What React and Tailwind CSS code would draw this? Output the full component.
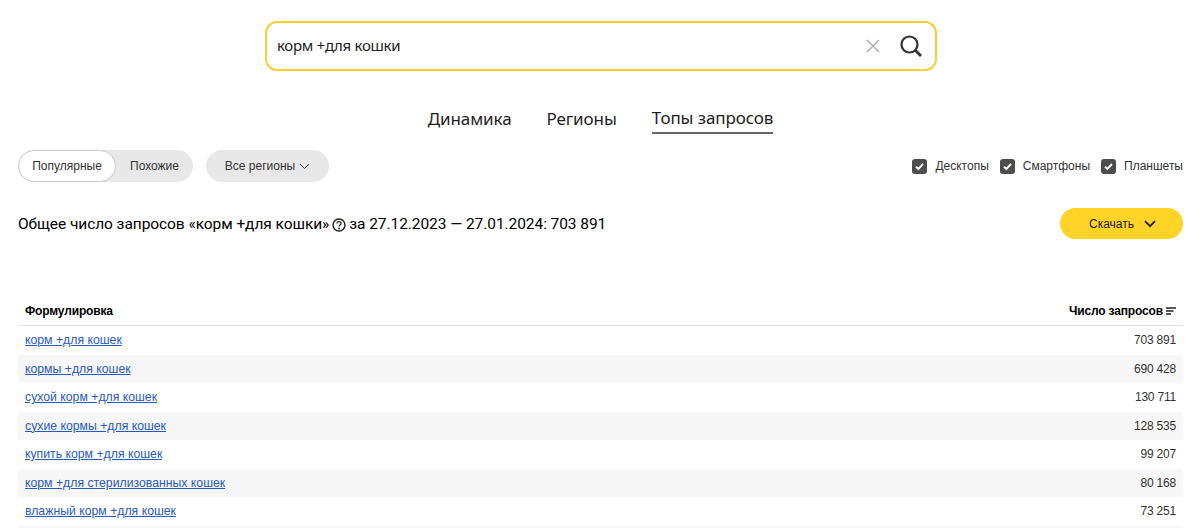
const rows = [
  ["корм +для кошек", "703 891"],
  ["кормы +для кошек", "690 428"],
  ["сухой корм +для кошек", "130 711"],
  ["сухие кормы +для кошек", "128 535"],
  ["купить корм +для кошек", "99 207"],
  ["корм +для стерилизованных кошек", "80 168"],
  ["влажный корм +для кошек", "73 251"],
  ["", ""],
];

function Check({ label }) {
  return (
    <label className="flex items-center gap-[8px]">
      <span className="flex h-[15px] w-[15px] items-center justify-center rounded-[3px] bg-[#4d4d4d]">
        <svg width="11" height="11" viewBox="0 0 11 11" fill="none">
          <path d="M2 5.7 4.4 8 9 3" stroke="#fff" strokeWidth="1.9" />
        </svg>
      </span>
      <span>{label}</span>
    </label>
  );
}

export default function App() {
  return (
    <div className="h-[528px] overflow-hidden bg-white pl-[18px] pr-[17px] pt-[21px] font-['Liberation_Sans',sans-serif] text-[#1a1a1a]">
      <div className="ml-[247px] flex h-[50px] w-[672px] items-center rounded-[12px] border-2 border-[#fc3] pl-[10px] pr-[12px]">
        <span className="flex-1 pb-[2px] font-['Noto_Sans',sans-serif] text-[15px] tracking-[-0.3px] text-[#222]">корм +для кошки</span>
        <svg width="16" height="16" viewBox="0 0 16 16" fill="none" className="mr-[18px]">
          <path d="M2 2 14 14M14 2 2 14" stroke="#aaa" strokeWidth="1.4" />
        </svg>
        <svg width="24" height="24" viewBox="0 0 24 24" fill="none">
          <circle cx="10.5" cy="10.5" r="8" stroke="#333" strokeWidth="2.2" />
          <path d="m16.5 16.5 5.5 5.5" stroke="#333" strokeWidth="2.8" />
        </svg>
      </div>

      <div className="mt-[33px] flex justify-center gap-[35px] font-['Noto_Sans',sans-serif] text-[17px] leading-[30px] tracking-[-0.1px] text-[#222]">
        <span>Динамика</span>
        <span>Регионы</span>
        <span className="border-b-2 border-[#666] leading-[28px]">Топы запросов</span>
      </div>

      <div className="mt-[16px] flex h-[32px] items-center justify-between text-[12px] text-[#333]">
        <div className="flex gap-[13px]">
          <div className="flex h-[32px] rounded-full bg-[#e8e8e8]">
            <span className="flex w-[98px] items-center justify-center rounded-full border border-[#ccc] bg-white">Популярные</span>
            <span className="flex w-[77px] items-center justify-center">Похожие</span>
          </div>
          <div className="flex h-[32px] w-[123px] items-center justify-center gap-[4px] rounded-full bg-[#e8e8e8]">
            Все регионы
            <svg width="11" height="7" viewBox="0 0 11 7" fill="none">
              <path d="m1 1 4.5 4.5L10 1" stroke="#333" />
            </svg>
          </div>
        </div>
        <div className="flex gap-[11px]">
          <Check label="Десктопы" />
          <Check label="Смартфоны" />
          <Check label="Планшеты" />
        </div>
      </div>

      <div className="mt-[26px] flex h-[31px] items-center justify-between">
        <div className="flex items-center pt-[2px] font-['Roboto',sans-serif] text-[15.5px] tracking-[-0.07px] text-black">
          Общее число запросов «корм +для кошки»
          <svg width="14" height="14" viewBox="0 0 14 14" fill="none" className="mx-[3px]">
            <circle cx="7" cy="7" r="6" stroke="#222" strokeWidth="1.4" />
            <path d="M5 5.5C5 3 9 3 9 5.4 9 7 7 7 7 8.6" stroke="#222" strokeWidth="1.3" />
            <circle cx="7" cy="10.5" r=".9" fill="#222" />
          </svg>
          за 27.12.2023 — 27.01.2024: 703 891
        </div>
        <div className="flex h-[31px] w-[123px] items-center justify-center gap-[10px] rounded-full bg-[#ffd426] pl-[2px] pt-[1px] text-[12px] text-[#222]">
          Скачать
          <svg width="12" height="8" viewBox="0 0 12 8" fill="none">
            <path d="m1 1.2 5 5 5-5" stroke="#222" strokeWidth="1.8" />
          </svg>
        </div>
      </div>

      <div className="mt-[57px] text-[12.25px]">
        <div className="flex h-[30px] items-center justify-between border-b border-[#e5e5e5] px-[7px] text-[12px] font-bold tracking-[-0.15px] text-black">
          <span>Формулировка</span>
          <span className="flex items-center gap-[3px]">
            Число запросов
            <svg width="10" height="8" viewBox="0 0 10 8" fill="none">
              <path d="M0 1h10M0 4h7.5M0 7h5" stroke="#222" strokeWidth="1.3" />
            </svg>
          </span>
        </div>
        {rows.map(([q, n], i) => (
          <div key={i} className={`flex h-[28.5px] items-center justify-between px-[7px] ${i % 2 ? "bg-[#f7f7f7]" : ""}`}>
            <a href="#" className="text-[#2a5ac0] underline">{q}</a>
            <span className="text-[12px] tracking-[-0.2px] text-[#333]">{n}</span>
          </div>
        ))}
      </div>
    </div>
  );
}
